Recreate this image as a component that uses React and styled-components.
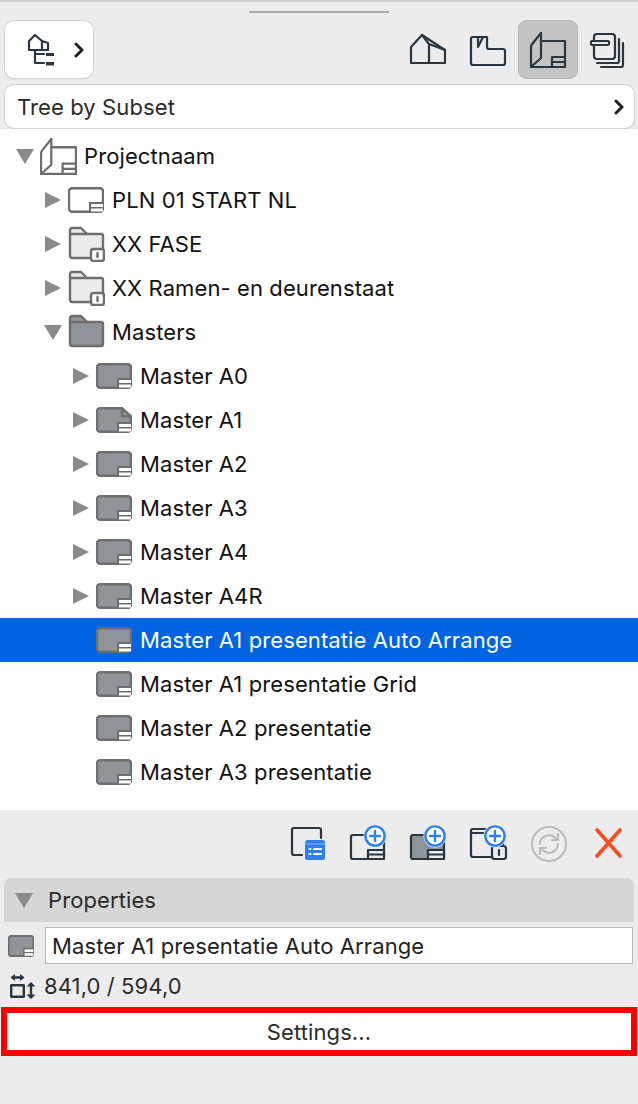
import React from 'react';
import styled, { createGlobalStyle } from 'styled-components';

const GlobalStyle = createGlobalStyle`
  html, body { margin: 0; padding: 0; background: #ececec; }
  * { box-sizing: border-box; }
`;

const DARK = '#2a3640';
const GREY = '#6e6e6e';
const BLUE = '#2f7ff0';
const FILL = '#8e9499';

const Page = styled.div`
  width: 638px;
  height: 1104px;
  overflow: hidden;
  background: #ececec;
  font-family: Inter, "Liberation Sans", sans-serif;
  font-size: 22px;
  letter-spacing: 0.1px;
  color: #111;
  display: flex;
  flex-direction: column;
`;

const TopEdge = styled.div`
  height: 2px;
  background: #d0d0d0;
`;

const Grip = styled.div`
  align-self: center;
  width: 140px;
  height: 2px;
  margin-top: 9px;
  background: #a8a8a8;
`;

const Toolbar = styled.div`
  display: flex;
  align-items: center;
  justify-content: space-between;
  height: 59px;
  margin-top: 7px;
  padding-left: 5px;
`;

const MapButton = styled.div`
  width: 88px;
  height: 57px;
  padding: 0 8px 0 21px;
  display: flex;
  align-items: center;
  justify-content: space-between;
  background: #fff;
  border-radius: 9px;
  box-shadow: 0 0 0 1px #d4d4d4, 0 1px 1px #bbb;
`;

const ToolGroup = styled.div`
  display: flex;
  align-items: center;
`;

const ToolButton = styled.div`
  width: 60px;
  height: 59px;
  display: flex;
  align-items: center;
  justify-content: center;
  border-radius: 9px;
  background: ${(p) => (p.$active ? '#c4c4c4' : 'transparent')};
  box-shadow: ${(p) => (p.$active ? 'inset 0 0 0 1px #b6b6b6' : 'none')};
`;

const PathField = styled.div`
  height: 43px;
  margin: 6px 4px 0 5px;
  padding: 1px 9px 0 12px;
  display: flex;
  align-items: center;
  justify-content: space-between;
  background: #fff;
  border-radius: 9px;
  color: #2b2b2b;
  box-shadow: 0 0 0 1px #d4d4d4, 0 1px 1px #bbb;
`;

const Tree = styled.div`
  margin-top: 1px;
  padding: 5px 0 16px;
  background: #fff;
`;

const Row = styled.div`
  height: 44px;
  padding-left: ${(p) => 16 + p.$depth * 28}px;
  display: flex;
  align-items: center;
  background: ${(p) => (p.$selected ? '#0063e1' : 'transparent')};
  color: ${(p) => (p.$selected ? '#fff' : '#111')};
`;

const Twisty = styled.div`
  width: 17px;
  height: 17px;
  flex: none;
  margin-right: 7px;
  display: flex;
  align-items: center;
  justify-content: center;
`;

const Triangle = styled.span`
  width: 0;
  height: 0;
  ${(p) =>
    p.$open
      ? `border-left: 9px solid transparent;
         border-right: 9px solid transparent;
         border-top: 15px solid #8a8a8a;`
      : `border-top: 8.5px solid transparent;
         border-bottom: 8.5px solid transparent;
         border-left: 16px solid #8a8a8a;`}
`;

const RowIcon = styled.div`
  width: 37px;
  height: 36px;
  flex: none;
  margin-right: 7px;
  display: flex;
  align-items: center;
  justify-content: flex-start;
`;

const Label = styled.span`
  white-space: nowrap;
`;

const ActionBar = styled.div`
  height: 68px;
  display: flex;
  align-items: center;
  justify-content: flex-end;
`;

const SectionHeader = styled.div`
  height: 44px;
  margin: 0 4px;
  padding-left: 11px;
  display: flex;
  align-items: center;
  gap: 15px;
  background: #d6d6d6;
  border-radius: 7px 7px 0 0;
  color: #2b2b2b;
`;

const NameRow = styled.div`
  margin-top: 5px;
  padding: 0 5px 0 8px;
  display: flex;
  align-items: center;
  gap: 11px;
`;

const NameInput = styled.div`
  flex: 1;
  height: 37px;
  padding: 1px 0 0 6px;
  display: flex;
  align-items: center;
  background: #fff;
  border: 1px solid #b8b8b8;
  color: #222;
`;

const SizeRow = styled.div`
  height: 43px;
  padding-left: 10px;
  display: flex;
  align-items: center;
  gap: 8px;
  color: #2b2b2b;
`;

const SettingsFrame = styled.div`
  height: 49px;
  margin: 0 1px;
  border: 6px solid #ff0000;
`;

const SettingsButton = styled.div`
  height: 100%;
  padding-top: 1px;
  display: flex;
  align-items: center;
  justify-content: center;
  background: #fff;
  color: #2b2b2b;
`;

const Svg = styled.svg`
  display: block;
  flex: none;
  fill: none;
  stroke: ${(p) => p.$stroke || DARK};
  stroke-width: ${(p) => p.$weight || 2.2};
  stroke-linejoin: round;
  stroke-linecap: round;
`;

const Chevron = () => (
  <Svg width="12" height="16" viewBox="0 0 12 16" $stroke="#222" $weight={3}>
    <path d="M3 2l6 6-6 6" />
  </Svg>
);

const TreeMapIcon = () => (
  <Svg width="30" height="36" viewBox="0 0 30 36">
    <path d="M3 9v9h19v-7l-6-2-7-6z" />
    <path d="M16 9v9M9 18v13h9M9 22h9" />
    <rect x="20" y="21" width="8" height="3" fill={DARK} stroke="none" />
    <rect x="20" y="30" width="8" height="3.5" fill={DARK} stroke="none" />
  </Svg>
);

const HouseIcon = () => (
  <Svg width="40" height="40" viewBox="0 0 40 40">
    <path d="M3 33h34V20L14 5 3 17z" />
    <path d="M21 14v19M14 5l7 9 16 6" />
  </Svg>
);

const FloorIcon = () => (
  <Svg width="40" height="40" viewBox="0 0 40 40">
    <path d="M3 9a2 2 0 0 1 2-2h14v10a2 2 0 0 0 2 2h14a2 2 0 0 1 2 2v12a2 2 0 0 1-2 2H5a2 2 0 0 1-2-2z" />
    <path d="M10 7v10l5-10" />
  </Svg>
);

const LayoutBookIcon = ({ stroke = DARK, width = 40, height = 40, viewBox = '0 0 40 40', fill = 'none' }) => (
  <Svg width={width} height={height} viewBox={viewBox} $stroke={stroke}>
    <path d="M13 3L5 13q-2 2-2 4v20h34V11H13" fill={fill} />
    <path d="M13 3v25L3 37" />
    <path d="M24 37V27h13M24 32h13" />
  </Svg>
);

const StackIcon = () => (
  <Svg width="40" height="40" viewBox="0 0 40 40">
    <rect x="6" y="4" width="21" height="25" rx="3" />
    <rect x="3" y="11" width="18" height="4" rx="1" fill="#ececec" />
    <path d="M31 9v22a2 2 0 0 1-2 2H9" />
    <path d="M35 13v22a2 2 0 0 1-2 2H13" />
  </Svg>
);

const SheetIcon = ({ filled, folded, width = 36, height = 26 }) => (
  <Svg width={width} height={height} viewBox="0 0 36 26" preserveAspectRatio="none" $stroke={GREY} $weight={2.4}>
    <path
      d={
        folded
          ? 'M4 1.2h22l8.8 8v12.6a3 3 0 0 1-3 3H4a3 3 0 0 1-3-3V4.2a3 3 0 0 1 3-3z'
          : 'M4 1.2h28a3 3 0 0 1 3 3v17.6a3 3 0 0 1-3 3H4a3 3 0 0 1-3-3V4.2a3 3 0 0 1 3-3z'
      }
      fill={filled ? FILL : '#fff'}
    />
    {folded && <path d="M26 1.2v8h8.8" />}
    <rect x="21" y="15" width="14" height="10" fill={GREY} stroke="none" />
    <rect x="23" y="17" width="12" height="3" fill="#fff" stroke="none" />
    <rect x="23" y="21.5" width="12" height="3" fill="#fff" stroke="none" />
  </Svg>
);

const FolderIcon = ({ filled, locked }) => (
  <Svg width="37" height="36" viewBox="0 0 37 36" $stroke={GREY} $weight={2.4}>
    <path
      d="M2 4a2 2 0 0 1 2-2h9l6 6h14a2 2 0 0 1 2 2v20a2 2 0 0 1-2 2H4a2 2 0 0 1-2-2z"
      fill={filled ? FILL : '#ececec'}
    />
    <path d="M2 8h17" />
    {locked && (
      <>
        <rect x="23" y="23" width="13" height="12" rx="2.5" fill="#fff" />
        <path d="M29.5 27v4" />
      </>
    )}
  </Svg>
);

const PlusBadge = ({ cx, cy }) => (
  <>
    <circle cx={cx} cy={cy} r="11.5" fill="#ececec" stroke="none" />
    <circle cx={cx} cy={cy} r="9.6" fill="#fff" stroke={BLUE} strokeWidth="2.4" />
    <path d={`M${cx - 5} ${cy}h10M${cx} ${cy - 5}v10`} stroke={BLUE} strokeWidth="2.4" />
  </>
);

const PropertiesListIcon = () => (
  <Svg width="40" height="40" viewBox="0 0 40 40">
    <path d="M14 31H6a2 2 0 0 1-2-2V6a2 2 0 0 1 2-2h25a2 2 0 0 1 2 2v8" />
    <rect x="17" y="16" width="20" height="20" rx="2.5" fill={BLUE} stroke="none" />
    <path d="M17 20h20" stroke="#8db8f7" strokeWidth="1.2" />
    <path d="M21.5 25h1M26 25h7M21.5 30h1M26 30h7" stroke="#fff" strokeWidth="2" />
  </Svg>
);

const NewSheetIcon = ({ filled }) => (
  <Svg width="40" height="40" viewBox="0 0 40 40">
    <path
      d="M5 11h29a2 2 0 0 1 2 2v20a2 2 0 0 1-2 2H5a2 2 0 0 1-2-2V13a2 2 0 0 1 2-2z"
      fill={filled ? FILL : 'none'}
    />
    <rect x="20" y="26" width="16" height="9" fill="#ececec" />
    <path d="M20 30.5h16" />
    <PlusBadge cx="27" cy="12" />
  </Svg>
);

const NewFolderIcon = () => (
  <Svg width="40" height="40" viewBox="0 0 40 40">
    <path d="M5 5h28a2 2 0 0 1 2 2v24a2 2 0 0 1-2 2H5a2 2 0 0 1-2-2V7a2 2 0 0 1 2-2z" />
    <path d="M3 9h20" />
    <rect x="24" y="22" width="14" height="13" rx="2.5" fill="#ececec" />
    <path d="M31 26v5" />
    <PlusBadge cx="27" cy="12" />
  </Svg>
);

const SyncIcon = () => (
  <Svg width="40" height="40" viewBox="0 0 40 40" $stroke="#bdbdbd">
    <circle cx="21" cy="20" r="17" />
    <path d="M12 20a9 9 0 0 1 15-6.5l2 2" />
    <path d="M30 10v6h-6" />
    <path d="M30 20a9 9 0 0 1-15 6.5l-2-2" />
    <path d="M12 30v-6h6" />
  </Svg>
);

const DeleteIcon = () => (
  <Svg width="40" height="40" viewBox="0 0 40 40" $stroke="#ff4a1c" $weight={3.6}>
    <path d="M9 6l23 26M32 6L9 32" />
  </Svg>
);

const SizeIcon = () => (
  <Svg width="26" height="26" viewBox="0 0 26 26" $weight={2.4}>
    <rect x="1.2" y="12.2" width="12.6" height="11.6" />
    <path d="M3 4.5h9" />
    <path d="M0.5 4.5l4.5-3.5v7zM14.5 4.5l-4.5-3.5v7z" fill={DARK} stroke="none" />
    <path d="M21 13v9" />
    <path d="M21 9l4.5 4.5h-9zM21 26l4.5-4.5h-9z" fill={DARK} stroke="none" />
  </Svg>
);

const rows = [
  {
    depth: 0,
    open: true,
    text: 'Projectnaam',
    icon: <LayoutBookIcon stroke={GREY} width={37} height={37} viewBox="2 2 36 36" fill="#fff" />,
  },
  { depth: 1, open: false, text: 'PLN 01 START NL', icon: <SheetIcon /> },
  { depth: 1, open: false, text: 'XX FASE', icon: <FolderIcon locked /> },
  { depth: 1, open: false, text: 'XX Ramen- en deurenstaat', icon: <FolderIcon locked /> },
  { depth: 1, open: true, text: 'Masters', icon: <FolderIcon filled /> },
  { depth: 2, open: false, text: 'Master A0', icon: <SheetIcon filled /> },
  { depth: 2, open: false, text: 'Master A1', icon: <SheetIcon filled folded /> },
  { depth: 2, open: false, text: 'Master A2', icon: <SheetIcon filled /> },
  { depth: 2, open: false, text: 'Master A3', icon: <SheetIcon filled /> },
  { depth: 2, open: false, text: 'Master A4', icon: <SheetIcon filled /> },
  { depth: 2, open: false, text: 'Master A4R', icon: <SheetIcon filled /> },
  { depth: 2, text: 'Master A1 presentatie Auto Arrange', icon: <SheetIcon filled />, selected: true },
  { depth: 2, text: 'Master A1 presentatie Grid', icon: <SheetIcon filled /> },
  { depth: 2, text: 'Master A2 presentatie', icon: <SheetIcon filled /> },
  { depth: 2, text: 'Master A3 presentatie', icon: <SheetIcon filled /> },
];

const App = () => (
  <Page>
    <GlobalStyle />
    <TopEdge />
    <Grip />
    <Toolbar>
      <MapButton>
        <TreeMapIcon />
        <Chevron />
      </MapButton>
      <ToolGroup>
        <ToolButton><HouseIcon /></ToolButton>
        <ToolButton><FloorIcon /></ToolButton>
        <ToolButton $active><LayoutBookIcon /></ToolButton>
        <ToolButton><StackIcon /></ToolButton>
      </ToolGroup>
    </Toolbar>
    <PathField>
      <Label>Tree by Subset</Label>
      <Chevron />
    </PathField>
    <Tree>
      {rows.map((row) => (
        <Row key={row.text} $depth={row.depth} $selected={row.selected}>
          <Twisty>{row.open !== undefined && <Triangle $open={row.open} />}</Twisty>
          <RowIcon>{row.icon}</RowIcon>
          <Label>{row.text}</Label>
        </Row>
      ))}
    </Tree>
    <ActionBar>
      <ToolButton><PropertiesListIcon /></ToolButton>
      <ToolButton><NewSheetIcon /></ToolButton>
      <ToolButton><NewSheetIcon filled /></ToolButton>
      <ToolButton><NewFolderIcon /></ToolButton>
      <ToolButton><SyncIcon /></ToolButton>
      <ToolButton><DeleteIcon /></ToolButton>
    </ActionBar>
    <SectionHeader>
      <Triangle $open />
      <Label>Properties</Label>
    </SectionHeader>
    <NameRow>
      <SheetIcon filled width={26} height={22} />
      <NameInput>Master A1 presentatie Auto Arrange</NameInput>
    </NameRow>
    <SizeRow>
      <SizeIcon />
      <Label>841,0 / 594,0</Label>
    </SizeRow>
    <SettingsFrame>
      <SettingsButton>Settings...</SettingsButton>
    </SettingsFrame>
  </Page>
);

export default App;
